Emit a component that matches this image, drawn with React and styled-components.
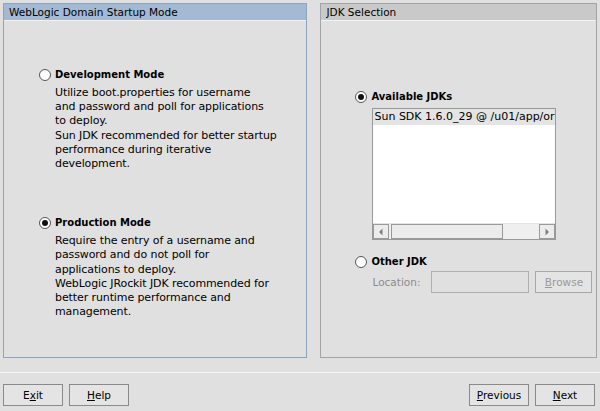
import styled, { createGlobalStyle } from "styled-components";

const GlobalStyle = createGlobalStyle`
    html, body {
        margin: 0;
        padding: 0;
        background: #e0e0e0;
    }
    * {
        box-sizing: border-box;
    }
`

const Frame = styled.div`
    width: 600px;
    height: 411px;
    padding: 3px 3px 0 3px;
    display: flex;
    flex-direction: column;
    background: #e0e0e0;
    font-family: "DejaVu Sans", "Liberation Sans", sans-serif;
    font-size: 10px;
    color: #000;
    overflow: hidden;
`

const Panels = styled.div`
    display: flex;
    gap: 13px;
    height: 355px;
`

const Panel = styled.div`
    width: ${p => p.$width}px;
    height: 100%;
    border: 1px solid ${p => p.$active ? "#8ea3bd" : "#a4a4a4"};
    display: flex;
    flex-direction: column;
`

const PanelTitle = styled.div`
    height: 17px;
    padding: 0 0 0 5px;
    line-height: 16px;
    background: ${p => p.$active ? "#a4b9d2" : "#c9c9c9"};
    border-bottom: 1px solid #f2f2f2;
    font-size: 10.5px;
`

const PanelBody = styled.div`
    flex: 1;
    display: flex;
    flex-direction: column;
    padding: ${p => p.$pad};
`

const Option = styled.div`
    display: flex;
    flex-direction: column;
    margin-top: ${p => p.$top || 0}px;
`

const OptionRow = styled.label`
    display: flex;
    align-items: center;
    gap: 4px;
    height: 13px;
    font-weight: bold;
    color: ${p => p.$disabled ? "#8a8a8a" : "#000"};
`

const Radio = styled.span`
    width: 12px;
    height: 12px;
    border-radius: 50%;
    border: 1px solid #555;
    background: #fff;
    display: flex;
    align-items: center;
    justify-content: center;
    flex: none;
    &::after {
        content: "";
        display: ${p => p.$checked ? "block" : "none"};
        width: 6px;
        height: 6px;
        border-radius: 50%;
        background: #111;
    }
`

const Description = styled.div`
    margin: 5px 0 0 16px;
    font-size: 11px;
    line-height: 14.2px;
    letter-spacing: -0.1px;
`

const Indent = styled.div`
    margin-left: 17px;
    margin-top: ${p => p.$top || 0}px;
`

const ListBox = styled.div`
    width: 184px;
    height: 132px;
    border: 1px solid #999;
    background: #fff;
    display: flex;
    flex-direction: column;
    overflow: hidden;
`

const ListItem = styled.div`
    height: 16px;
    line-height: 16px;
    padding-left: 1px;
    font-size: 11px;
    background: ${p => p.$selected ? "#e4e4e4" : "transparent"};
    white-space: nowrap;
    overflow: hidden;
`

const ListSpace = styled.div`
    flex: 1;
`

const ScrollBar = styled.div`
    height: 16px;
    display: flex;
    background: #efefef;
    border-top: 1px solid #e4e4e4;
`

const ScrollArrow = styled.div`
    width: 16px;
    height: 100%;
    border: 1px solid #9a9a9a;
    background: #ececec;
    display: flex;
    align-items: center;
    justify-content: center;
    flex: none;
`

const ScrollTrack = styled.div`
    flex: 1;
    padding: 0 0 0 2px;
    display: flex;
`

const ScrollThumb = styled.div`
    width: 112px;
    height: 100%;
    border: 1px solid #9a9a9a;
    background: #ececec;
`

const FieldRow = styled.div`
    display: flex;
    align-items: center;
    margin: 3px 0 0 17px;
    height: 22px;
`

const FieldLabel = styled.span`
    color: #8c8c8c;
    font-size: 10.5px;
    width: 59px;
`

const TextField = styled.div`
    width: 98px;
    height: 22px;
    border: 1px solid #b0b0b0;
    background: #e0e0e0;
`

const Separator = styled.div`
    margin: 14px -3px 0 -3px;
    height: 1px;
    background: #f6f6f6;
`

const ButtonBar = styled.div`
    display: flex;
    gap: 6px;
    margin-top: 11px;
    padding: 0 2px 0 0;
`

const Spacer = styled.div`
    flex: 1;
`

const Button = styled.button`
    width: ${p => p.$width || 60}px;
    height: 22px;
    border: 1px solid ${p => p.$disabled ? "#a8a8a8" : "#8a8a8a"};
    background: #e4e4e4;
    font-family: inherit;
    font-size: 10.5px;
    color: ${p => p.$disabled ? "#9a9a9a" : "#000"};
    padding: 0;
    margin-left: ${p => p.$gap || 0}px;
    u {
        text-decoration: underline;
    }
`

const Arrow = ({ dir }) => (
    <svg width="6" height="8" viewBox="0 0 6 8">
        {dir === "left"
            ? <polygon points="4.5,0.5 4.5,7.5 1,4" fill="#808080" />
            : <polygon points="1.5,0.5 1.5,7.5 5,4" fill="#808080" />}
    </svg>
)

const App = () => (
    <Frame>
        <GlobalStyle />
        <Panels>
            <Panel $width={305} $active>
                <PanelTitle $active>WebLogic Domain Startup Mode</PanelTitle>
                <PanelBody $pad="47px 0 0 35px">
                    <Option>
                        <OptionRow><Radio />Development Mode</OptionRow>
                        <Description>
                            Utilize boot.properties for username<br />
                            and password and poll for applications<br />
                            to deploy.<br />
                            Sun JDK recommended for better startup<br />
                            performance during iterative<br />
                            development.
                        </Description>
                    </Option>
                    <Option $top={45}>
                        <OptionRow><Radio $checked />Production Mode</OptionRow>
                        <Description>
                            Require the entry of a username and<br />
                            password and do not poll for<br />
                            applications to deploy.<br />
                            WebLogic JRockit JDK recommended for<br />
                            better runtime performance and<br />
                            management.
                        </Description>
                    </Option>
                </PanelBody>
            </Panel>
            <Panel $width={277}>
                <PanelTitle>JDK Selection</PanelTitle>
                <PanelBody $pad="69px 0 0 34px">
                    <Option>
                        <OptionRow><Radio $checked />Available JDKs</OptionRow>
                        <Indent $top={5}>
                            <ListBox>
                                <ListItem $selected>Sun SDK 1.6.0_29 @ /u01/app/or</ListItem>
                                <ListSpace />
                                <ScrollBar>
                                    <ScrollArrow><Arrow dir="left" /></ScrollArrow>
                                    <ScrollTrack><ScrollThumb /></ScrollTrack>
                                    <ScrollArrow><Arrow dir="right" /></ScrollArrow>
                                </ScrollBar>
                            </ListBox>
                        </Indent>
                    </Option>
                    <Option $top={15}>
                        <OptionRow><Radio />Other JDK</OptionRow>
                        <FieldRow>
                            <FieldLabel>Location:</FieldLabel>
                            <TextField />
                            <Button $width={57} $gap={6} $disabled><u>B</u>rowse</Button>
                        </FieldRow>
                    </Option>
                </PanelBody>
            </Panel>
        </Panels>
        <Separator />
        <ButtonBar>
            <Button>E<u>x</u>it</Button>
            <Button><u>H</u>elp</Button>
            <Spacer />
            <Button><u>P</u>revious</Button>
            <Button><u>N</u>ext</Button>
        </ButtonBar>
    </Frame>
)

export default App
